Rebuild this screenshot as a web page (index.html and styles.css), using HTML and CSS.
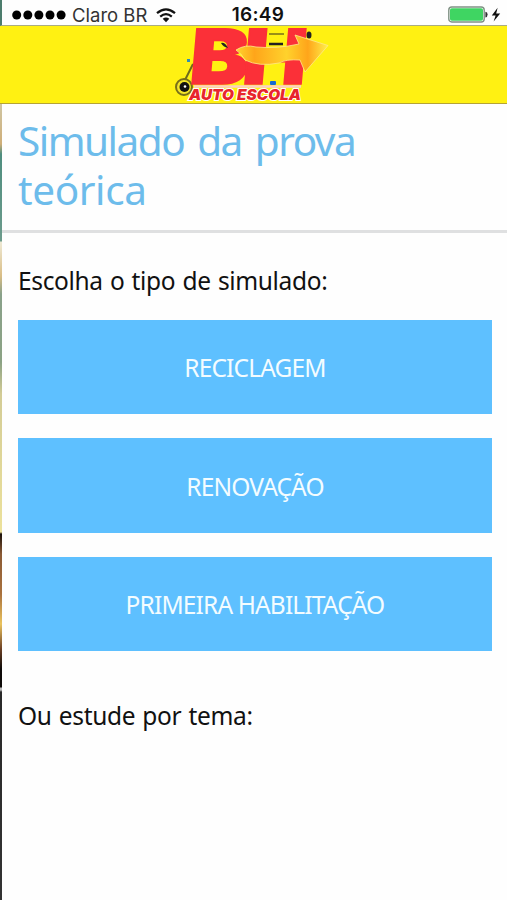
FILE: index.html
```html
<!DOCTYPE html>
<html lang="pt-BR">
<head>
    <meta charset="UTF-8">
    <meta name="viewport" content="width=device-width, initial-scale=1.0">
    <title>BH Auto Escola</title>
    <link rel="stylesheet" href="styles.css">
</head>
<body>
    <div class="app">
        <div class="status-bar">
            <div class="carrier">
                <svg class="signal" width="54" height="10" viewBox="0 0 54 10">
                    <circle cx="4.7" cy="5" r="4.5"/>
                    <circle cx="15.8" cy="5" r="4.5"/>
                    <circle cx="26.9" cy="5" r="4.5"/>
                    <circle cx="38" cy="5" r="4.5"/>
                    <circle cx="49.1" cy="5" r="4.5"/>
                </svg>
                <span class="carrier-name">Claro BR</span>
                <svg class="wifi" width="20" height="15" viewBox="0 0 20 15">
                    <path d="M1 5.2Q10-2.6 19 5.2M4.2 8.6Q10 3.6 15.8 8.6" fill="none" stroke="#111" stroke-width="2.2"/>
                    <path d="M6.7 10.8Q10 8 13.3 10.8L10 14.3Z" fill="#111"/>
                </svg>
            </div>
            <span class="time">16:49</span>
            <svg class="battery" width="54" height="18" viewBox="0 0 54 18">
                <rect x="0.8" y="1" width="35.4" height="15" rx="3" fill="#fff" stroke="#7f9184" stroke-width="1.4"/>
                <rect x="2" y="2.3" width="33" height="12.4" rx="1.8" fill="#3fd562"/>
                <path d="M37.4 5.8Q39.6 6 39.6 8.6T37.4 11.4Z" fill="#333"/>
                <path d="M49.6 1.8L43.8 9.5H47.6L45.6 15.6L52.2 7.5H48.2Z" fill="#111"/>
            </svg>
        </div>

        <header class="header">
            <svg class="logo" width="175" height="77" viewBox="0 0 175 77">
                <!-- moto -->
                <path d="M28 38L18 58" fill="none" stroke="#6d6a1c" stroke-width="2"/>
                <circle cx="19" cy="61" r="8" fill="#f3e52a" stroke="#77701a" stroke-width="2"/>
                <circle cx="19.5" cy="61" r="5" fill="#111"/>
                <circle cx="20" cy="60.5" r="1.3" fill="#fff"/>
                <rect x="22" y="33" width="3" height="3" fill="#2f8fb5"/>
                <path d="M104 8H119" stroke="#77701a" stroke-width="1.5"/>
                <path d="M104 18H118" stroke="#222" stroke-width="2.5"/>
                <ellipse cx="144" cy="9" rx="2.5" ry="3.5" fill="#222"/>
                <!-- letras -->
                <g class="logo-letters" transform="translate(27 57.5) skewX(-5)">
                    <text x="-4" y="0" textLength="59" lengthAdjust="spacingAndGlyphs">B</text>
                    <text x="49" y="0" textLength="64" lengthAdjust="spacingAndGlyphs">H</text>
                </g>
                <path d="M56 17Q60 16 63 22Q58 21 56 17Z" fill="#222"/>
                <rect x="105" y="55" width="6" height="4" rx="1" fill="#176bd0"/>
                <!-- seta -->
                <path d="M71 24Q80 18 91 21Q112 23 134 18L130 9L163 19.5L140 46L135 34Q121 33 114 37Q94 41 80 34Q76 27 71 24Z" fill="url(#seta)" stroke="#ffe98a" stroke-width="0.8"/>
                <path d="M29 60.5H136" stroke="#fbd1c6" stroke-width="2.5"/>
                <text class="logo-name" x="24" y="74" textLength="112" lengthAdjust="spacingAndGlyphs">AUTO ESCOLA</text>
                <defs>
                    <linearGradient id="seta">
                        <stop offset="0" stop-color="#ffd52e"/>
                        <stop offset="0.2" stop-color="#ffa51a"/>
                        <stop offset="0.55" stop-color="#ffd22c"/>
                        <stop offset="0.78" stop-color="#ffa51a"/>
                        <stop offset="1" stop-color="#fff04a"/>
                    </linearGradient>
                </defs>
            </svg>
        </header>

        <div class="page">
            <div class="edge"></div>
            <main class="content">
                <h1 class="title">Simulado da prova <span class="title-end">teórica</span></h1>
                <section class="section">
                    <p class="label">Escolha o tipo de simulado:</p>
                    <div class="options">
                        <button class="button" type="button">RECICLAGEM</button>
                        <button class="button" type="button">RENOVAÇÃO</button>
                        <button class="button" type="button">PRIMEIRA HABILITAÇÃO</button>
                    </div>
                    <p class="label theme">Ou estude por tema:</p>
                </section>
            </main>
        </div>
    </div>
</body>
</html>
```

FILE: styles.css
```css
* {
    margin: 0;
    padding: 0;
    box-sizing: border-box;
}
body {
    font-family: "Trebuchet MS", "Noto Sans", sans-serif;
    background-color: #fefefe;
    color: #111;
}
.app {
    height: 900px;
    display: flex;
    flex-direction: column;
}

/* Status bar */
.status-bar {
    height: 26px;
    display: grid;
    grid-template-columns: 1fr auto 1fr;
    align-items: center;
    padding: 5px 5px 0 12px;
    border-left: 2px solid #4d7d6d;
    border-bottom: 1px solid #a9ac83;
    font-family: Inter, "Liberation Sans", sans-serif;
    font-size: 18px;
    line-height: 20px;
}
.signal {
    margin-left: -2px;
}
.carrier {
    display: flex;
    align-items: center;
}
.carrier-name {
    margin: 0 9px 0 6px;
    font-size: 18.5px;
    letter-spacing: 0;
    color: #333;
}
.time {
    font-size: 19px;
    font-weight: 600;
    letter-spacing: 0.3px;
}
.battery {
    justify-self: end;
}

/* Header */
.header {
    height: 78px;
    flex: none;
    background-color: #fff112;
    border-bottom: 1px solid #b5a336;
}
.logo {
    display: block;
    margin-left: 165px;
    overflow: visible;
}
.logo-letters {
    font-family: Inter, sans-serif;
    font-size: 76px;
    font-weight: 900;
    fill: #fb3038;
    stroke: #fb3038;
    stroke-width: 1.5px;
}
.logo-name {
    font-family: Inter, sans-serif;
    font-size: 15px;
    font-weight: 900;
    font-style: italic;
    fill: #e8262c;
    stroke: #fff;
    stroke-width: 2px;
    paint-order: stroke;
}

/* Page */
.page {
    flex: 1;
    display: flex;
}
.edge {
    width: 2px;
    background: linear-gradient(#cfc6a4 0, #cfae78 40px, #4f8e7f 50px, #6c9b8c 137px, #eee9d5 138px, #d9bd85 172px, #89a18a 190px, #8ba284 258px, #d3cc96 290px, #ece19b 428px, #1c120b 430px, #8a5a35 450px, #a9713d 490px, #eac35e 520px, #6b3f24 545px, #0e0b09 565px, #0e0b09 583px, #bbb 584px, #bbb 586px, #292929 588px, #333 100%);
}
.content {
    flex: 1;
}
.title {
    height: 129px;
    padding: 13px 100px 0 16px;
    border-bottom: 3px solid #dfe0e1;
    font-size: 40.5px;
    font-weight: 400;
    line-height: 48.5px;
    letter-spacing: -1.5px;
    word-spacing: 4px;
    color: #6dbceb;
}
.title-end {
    letter-spacing: -0.4px;
}
.section {
    padding: 32px 15px 0 16px;
}
.label {
    font-size: 24.5px;
    line-height: 32px;
    letter-spacing: -0.35px;
    word-spacing: 1.2px;
}
.options {
    display: flex;
    flex-direction: column;
    gap: 24px;
    margin-top: 23px;
}
.button {
    height: 94.4px;
    padding-top: 1px;
    border: none;
    background-color: #5ec0ff;
    font-family: inherit;
    font-size: 24.5px;
    letter-spacing: -0.85px;
    color: #f3fcff;
    cursor: pointer;
}
.theme {
    margin-top: 48.4px;
}
```
